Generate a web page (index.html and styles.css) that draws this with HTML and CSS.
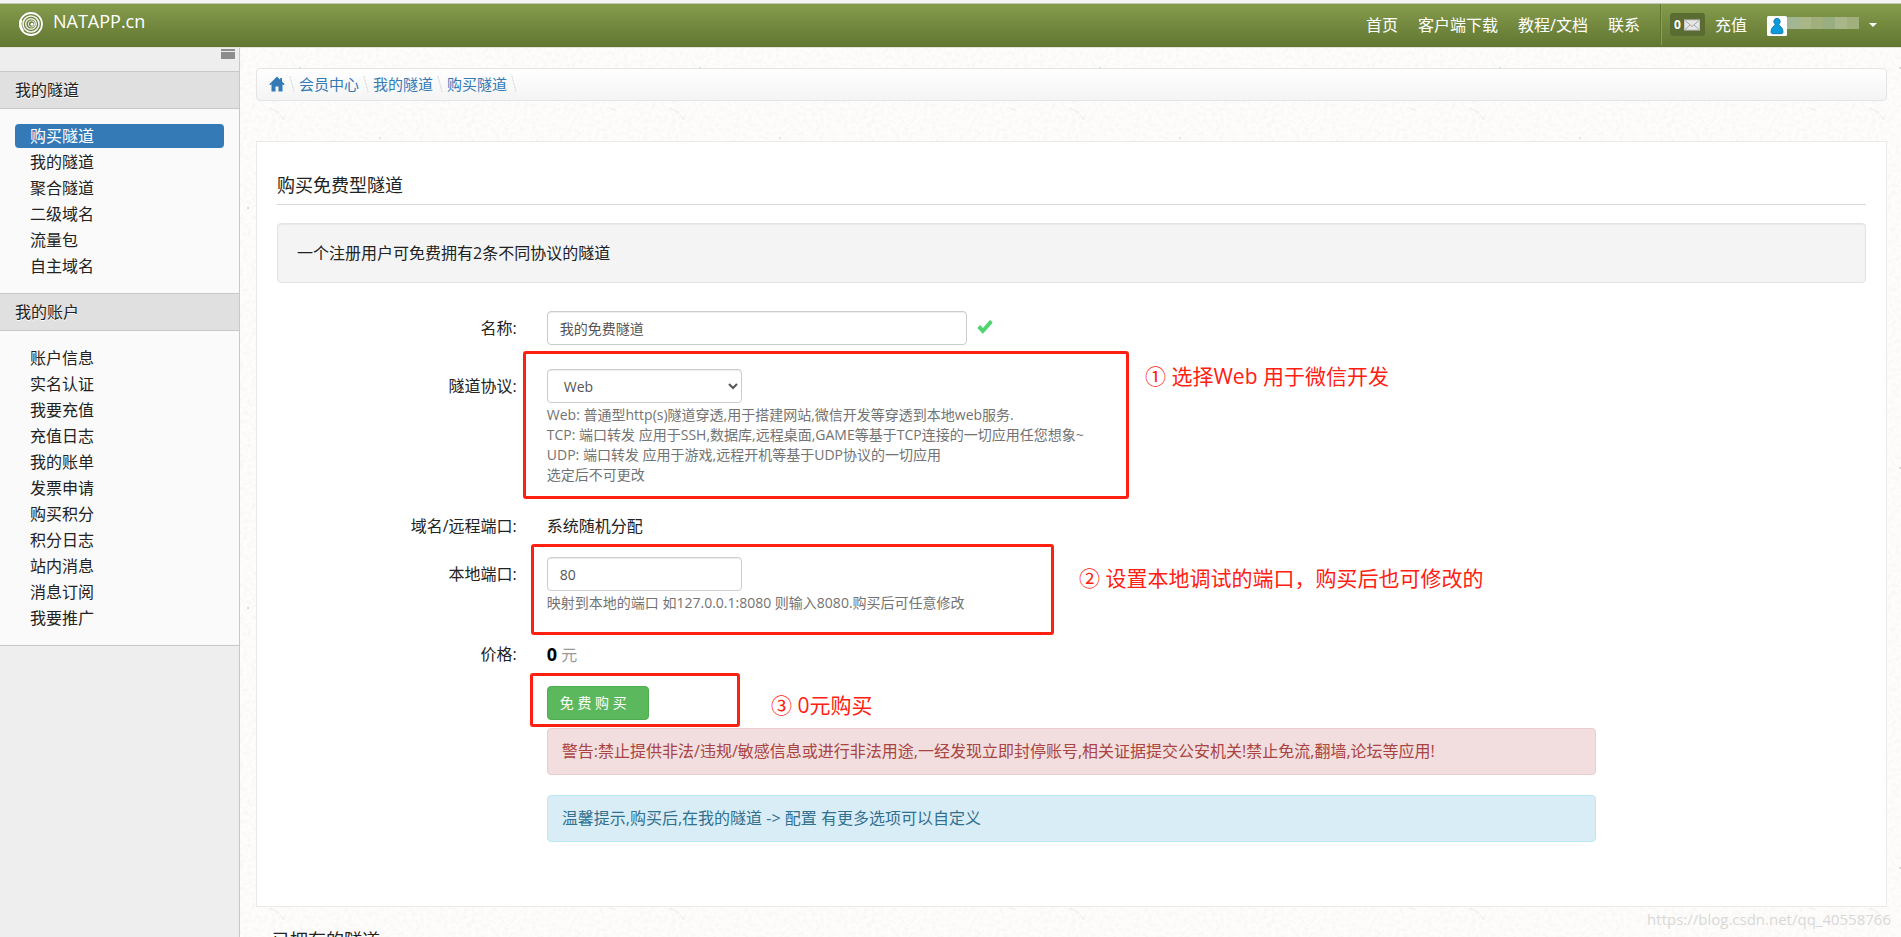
FILE: index.html
```html
<!DOCTYPE html>
<html lang="zh-CN">
<head>
<meta charset="utf-8">
<title>NATAPP.cn</title>
<link rel="stylesheet" href="styles.css">
</head>
<body>
<header class="topbar">
  <a class="brand" href="#">
    <svg class="brand-logo" viewBox="0 0 26 26" aria-hidden="true">
      <circle cx="13" cy="13" r="12.5" fill="#5f7333" opacity=".5"/>
      <g fill="none" stroke="#fff">
        <circle cx="13" cy="13" r="11" stroke-width="1.8"/>
        <path d="M5 20a11 11 0 0 1-2-11" stroke-width="2.6"/>
        <circle cx="13" cy="13" r="8" stroke-width="1.6" opacity=".9"/>
        <circle cx="13" cy="13" r="5.3" stroke-width="1.5" opacity=".85"/>
        <circle cx="13.5" cy="13" r="3.2" stroke-width="1" opacity=".85"/>
      </g>
      <circle cx="14" cy="13.2" r="1.5" fill="#fff"/>
    </svg>
    <span class="brand-name">NATAPP.cn</span>
  </a>
  <nav class="topnav">
    <a href="#">首页</a>
    <a href="#">客户端下载</a>
    <a href="#">教程/文档</a>
    <a href="#">联系</a>
  </nav>
  <div class="account">
    <a class="mail" href="#"><b>0</b>
      <svg viewBox="0 0 16 12" aria-hidden="true"><rect x=".5" y="1" width="15" height="10" fill="#e6e6e6" stroke="#c6c6cb"/><path d="M1 1.500l7 6 7-6M1 10.500l5-4.500M15 10.500l-5-4.500" fill="none" stroke="#a5a5a5"/></svg>
    </a>
    <a href="#">充值</a>
    <button class="user" type="button" aria-label="账户">
      <svg class="avatar" viewBox="0 0 20 20" aria-hidden="true"><rect width="20" height="20" rx="1.500" fill="#fff"/><path d="M10 2.300a3.200 3.200 0 0 1 2.400 5.300c-.6.700-.6 1.500.2 2.100 2 1.200 3.400 3.200 3.400 6.300 0 1.200-.8 1.700-2 1.700H6c-1.200 0-2-.5-2-1.700 0-3.100 1.400-5.100 3.400-6.300.8-.6.800-1.400.2-2.100A3.200 3.200 0 0 1 10 2.300z" fill="#0a9bdc" stroke="#06689e" stroke-width=".8"/></svg>
      <span class="mask"><i></i><i></i><i></i><i></i><i></i><i></i></span>
      <span class="caret"></span>
    </button>
  </div>
</header>

<div class="shell">
  <aside class="sidebar">
    <button class="collapse" type="button" aria-label="菜单"></button>
    <h2>我的隧道</h2>
    <ul>
      <li><a class="active" href="#">购买隧道</a></li>
      <li><a href="#">我的隧道</a></li>
      <li><a href="#">聚合隧道</a></li>
      <li><a href="#">二级域名</a></li>
      <li><a href="#">流量包</a></li>
      <li><a href="#">自主域名</a></li>
    </ul>
    <h2>我的账户</h2>
    <ul>
      <li><a href="#">账户信息</a></li>
      <li><a href="#">实名认证</a></li>
      <li><a href="#">我要充值</a></li>
      <li><a href="#">充值日志</a></li>
      <li><a href="#">我的账单</a></li>
      <li><a href="#">发票申请</a></li>
      <li><a href="#">购买积分</a></li>
      <li><a href="#">积分日志</a></li>
      <li><a href="#">站内消息</a></li>
      <li><a href="#">消息订阅</a></li>
      <li><a href="#">我要推广</a></li>
    </ul>
  </aside>

  <main class="main">
    <nav class="crumbs">
      <a href="#" aria-label="首页"><svg viewBox="0 0 16 16" aria-hidden="true"><path d="M8 .5L.3 8.200l1 1L2.500 8.200V15.500H6.500V10.500H9.500V15.500H13.500V8.200l1.200 1 1-1L13 5.500V2h-1.800v1.700z" fill="#337ab7"/></svg></a>
      <a href="#">会员中心</a>
      <a href="#">我的隧道</a>
      <a href="#">购买隧道</a>
    </nav>

    <section class="panel">
      <h1>购买免费型隧道</h1>
      <p class="well">一个注册用户可免费拥有2条不同协议的隧道</p>

      <form class="form">
        <div class="row">
          <label for="name">名称:</label>
          <div class="field inline">
            <input class="control wide" id="name" type="text" value="我的免费隧道">
            <svg class="ok" viewBox="0 0 16 16" aria-hidden="true"><path d="M2.500 6.500L.8 8.600a.8.800 0 0 0 0 1L5.200 14.300a.8.800 0 0 0 1.200 0L15.300 4.200a.8.800 0 0 0 0-1.100L13.600 1.400a.8.800 0 0 0-1.200 0L6 9 3.700 6.500a.8.800 0 0 0-1.200 0z" fill="#4fd46f"/></svg>
          </div>
        </div>
        <div class="row">
          <label for="proto">隧道协议:</label>
          <div class="field">
            <select class="control" id="proto"><option>Web</option><option>TCP</option><option>UDP</option></select>
            <p class="help">Web: 普通型http(s)隧道穿透,用于搭建网站,微信开发等穿透到本地web服务.<br>TCP: 端口转发 应用于SSH,数据库,远程桌面,GAME等基于TCP连接的一切应用任您想象~<br>UDP: 端口转发 应用于游戏,远程开机等基于UDP协议的一切应用<br>选定后不可更改</p>
          </div>
          <div class="mark mark-1"></div>
          <p class="note note-1">① 选择Web 用于微信开发</p>
        </div>
        <div class="row">
          <span class="label">域名/远程端口:</span>
          <div class="field static">系统随机分配</div>
        </div>
        <div class="row tight">
          <label for="port">本地端口:</label>
          <div class="field">
            <input class="control" id="port" type="text" value="80">
            <p class="help">映射到本地的端口 如127.0.0.1:8080 则输入8080.购买后可任意修改</p>
          </div>
          <div class="mark mark-2"></div>
          <p class="note note-2">② 设置本地调试的端口，购买后也可修改的</p>
        </div>
        <div class="row">
          <span class="label">价格:</span>
          <div class="field static price"><b>0</b> 元</div>
        </div>
        <div class="row tight">
          <span class="label"></span>
          <div class="field">
            <button class="buy" type="button">免 费 购 买</button>
            <p class="alert danger">警告:禁止提供非法/违规/敏感信息或进行非法用途,一经发现立即封停账号,相关证据提交公安机关!禁止免流,翻墙,论坛等应用!</p>
            <p class="alert info">温馨提示,购买后,在我的隧道 -&gt; 配置 有更多选项可以自定义</p>
          </div>
          <div class="mark mark-3"></div>
          <p class="note note-3">③ 0元购买</p>
        </div>
      </form>
    </section>

    <h2 class="owned">已拥有的隧道</h2>
  </main>
</div>
<p class="watermark">https://blog.csdn.net/qq_40558766</p>
</body>
</html>
```

FILE: styles.css
```css
* { box-sizing: border-box; }

body {
  margin: 0;
  height: 100vh;
  overflow: hidden;
  display: flex;
  flex-direction: column;
  position: relative;
  border-top: 3px solid #f4f4f4;
  font-family: "Open Sans", "Noto Sans CJK SC", sans-serif;
  font-size: 16px;
  font-weight: 400;
  line-height: 24px;
  color: #222;
  background: #eee;
}

h1, h2, p, ul { margin: 0; padding: 0; font-weight: inherit; }
ul { list-style: none; }
a { color: inherit; text-decoration: none; }
button, input, select { font: inherit; }
svg { display: block; }

/* top bar */
.topbar {
  flex: none;
  display: flex;
  height: 45px;
  padding: 0 24px 0 18px;
  color: #fff;
  border-top: 1px solid #c3c8b4;
  border-bottom: 1px solid #e4e6dc;
  background: linear-gradient(#859b4d, #617630);
}
.brand { display: flex; align-items: center; gap: 9px; margin-right: auto; }
.brand-logo { width: 26px; height: 26px; margin-bottom: 4px; }
.brand-name { font-size: 18px; margin-bottom: 10px; }
.topnav { display: flex; align-items: center; gap: 20px; padding: 0 20px 2px 0; }
.account {
  display: flex;
  align-items: center;
  gap: 10px;
  align-self: flex-start;
  height: 41px;
  padding-left: 9px;
  border-left: 1px solid #61752f;
  box-shadow: inset 1px 0 #8ba154;
}
.mail {
  display: flex;
  align-items: center;
  gap: 3px;
  height: 23px;
  width: 35px;
  padding-left: 4px;
  border-radius: 3px;
  background: #5a6c32;
  font-size: 12px;
}
.mail svg { width: 16px; height: 12px; }
.user {
  display: flex;
  align-items: center;
  margin-left: 10px;
  padding: 0;
  border: 0;
  background: none;
}
.avatar { width: 20px; height: 20px; margin-top: 2px; }
.mask { display: flex; width: 72px; height: 12px; margin-right: 10px; margin-bottom: 4px; }
.mask i { flex: 1; background: #a0af7c; }
.mask i:nth-child(1) { background: #a3b694; }
.mask i:nth-child(2) { background: #a9b687; }
.mask i:nth-child(4) { background: #98ae80; }
.mask i:nth-child(5) { background: #a8b68a; }
.caret { border: 4px solid transparent; border-top-color: #fff; border-bottom: 0; }

.shell { flex: 1; display: flex; min-height: 0; }

/* sidebar */
.sidebar { flex: none; width: 240px; border-right: 1px solid #c8c8c8; background: #eee; }
.collapse {
  display: block;
  width: 14px;
  height: 10px;
  margin: 1px 4px 12px auto;
  padding: 0;
  border: 0;
  background: linear-gradient(#8d8d8d 2px, #eee 2px, #eee 3px, #8d8d8d 3px);
}
.sidebar h2 {
  height: 38px;
  padding-left: 15px;
  font-size: 16px;
  line-height: 36px;
  border-top: 1px solid #c8c8c8;
  border-bottom: 1px solid #c8c8c8;
  background: #e0e0e0;
  text-shadow: 0 1px #fff;
}
.sidebar ul { display: grid; gap: 2px; padding: 15px; background: #fafafa; }
.sidebar ul:last-child { border-bottom: 1px solid #c8c8c8; }
.sidebar li a { display: block; padding-left: 15px; border-radius: 4px; }
.sidebar li a.active { color: #fff; background: #337ab7; }

/* content */
.main {
  flex: 1;
  min-width: 0;
  overflow: hidden;
  padding: 20px 14px 0 16px;
  background-color: #fefdfc;
  background-image: url("data:image/svg+xml,%3Csvg xmlns='http://www.w3.org/2000/svg' width='400' height='400'%3E%3Cfilter id='a'%3E%3CfeTurbulence type='fractalNoise' baseFrequency='.25' numOctaves='3' stitchTiles='stitch'/%3E%3CfeColorMatrix values='0 0 0 0 .64 0 0 0 0 .6 0 0 0 0 .56 .3 0 0 0 -.12'/%3E%3C/filter%3E%3Crect width='400' height='400' filter='url(%23a)'/%3E%3Cg fill='none' stroke='%23b5b5ae' opacity='.25'%3E%3Cpath d='M30 60q10 4 14 12M210 25q12-8 20 2M330 180q8-10 18-12M90 250q14 2 20-6M250 330l10 9M160 140l4 7M20 350l3-6M370 60l5 2'/%3E%3C/g%3E%3Cg fill='%23999' opacity='.5'%3E%3Ccircle cx='60' cy='20' r='.9'/%3E%3Ccircle cx='140' cy='90' r='.8'/%3E%3Ccircle cx='8' cy='160' r='1'/%3E%3Ccircle cx='300' cy='100' r='.8'/%3E%3Ccircle cx='260' cy='220' r='.9'/%3E%3Ccircle cx='100' cy='320' r='.9'/%3E%3Ccircle cx='350' cy='290' r='.8'/%3E%3C/g%3E%3C/svg%3E");
}
.crumbs {
  display: flex;
  align-items: center;
  height: 33px;
  padding: 0 0 2px 12px;
  border: 1px solid #e5e5e5;
  border-radius: 4px;
  background: linear-gradient(#fff, #f4f4f4);
  color: #337ab7;
  font-size: 15px;
}
.crumbs svg { width: 16px; height: 16px; }
.crumbs a { display: flex; align-items: center; }
.crumbs a::after {
  content: "";
  width: 14px;
  height: 16px;
  background: linear-gradient(75deg, transparent 46%, #e6e6e6 47%, #e6e6e6 53%, transparent 54%);
}

.panel {
  margin-top: 40px;
  padding: 30px 20px 64px;
  border: 1px solid #eaeaea;
  background: #fff;
}
.panel h1 {
  padding-bottom: 6px;
  border-bottom: 1px solid #d9d9d9;
  font-size: 18px;
  line-height: 26px;
}
.well {
  margin-top: 18px;
  padding: 17px 19px;
  border: 1px solid #e3e3e3;
  border-radius: 4px;
  background: #f4f4f4;
  box-shadow: inset 0 1px 1px rgba(0, 0, 0, .05);
}

.form { margin: 28px -15px 0; }
.row { display: flex; position: relative; margin-top: 24px; }
.row:first-child { margin-top: 0; }
.row.tight { margin-top: 14px; }
.row label, .label { width: 16.6667%; padding: 0 15px; text-align: right; line-height: 34px; }
.field { width: 66.6667%; padding: 0 15px; }
.inline { display: flex; align-items: center; gap: 10px; }
.static { line-height: 34px; }
.control {
  display: block;
  width: 195px;
  height: 34px;
  padding: 6px 12px;
  border: 1px solid #ccc;
  border-radius: 4px;
  background: #fff;
  box-shadow: inset 0 1px 1px rgba(0, 0, 0, .075);
  color: #555;
  font-size: 14px;
  line-height: 20px;
}
select.control { padding-right: 4px; }
.wide { width: 420px; }
.ok { width: 16px; height: 16px; margin-bottom: 2px; }
.help { margin-top: 2px; color: #737373; font-size: 14px; line-height: 20px; }
.price { color: #999; }
.price b { color: #000; font-size: 18px; font-weight: 700; }

.buy {
  display: block;
  min-width: 102px;
  height: 34px;
  padding: 0 12px;
  border: 1px solid #4cae4c;
  border-radius: 4px;
  background: #5cb85c;
  color: #fff;
  font-size: 14px;
  text-align: left;
}
.alert { padding: 11px 14px; border: 1px solid; border-radius: 4px; line-height: 23px; }
.danger { margin-top: 8px; border-color: #ebccd1; background: #f2dede; color: #a94442; }
.info { margin-top: 20px; border-color: #bce8f1; background: #d9edf7; color: #31708f; }

/* callouts drawn over the form */
.mark { position: absolute; border: 3px solid #ff2011; border-radius: 3px; pointer-events: none; }
.mark-1 { left: 261px; top: -18px; width: 606px; height: 148px; }
.mark-2 { left: 269px; top: -13px; width: 523px; height: 91px; }
.mark-3 { left: 268px; top: -13px; width: 210px; height: 54px; }
.note { position: absolute; color: #ff2011; font-size: 21px; line-height: 28px; white-space: nowrap; }
.note-1 { left: 883px; top: -7px; }
.note-2 { left: 817px; top: 7px; }
.note-3 { left: 509px; top: 5px; }

.owned { margin: 19px 0 0 16px; font-size: 18px; line-height: 28px; }
.watermark { position: absolute; right: 10px; bottom: 6px; color: #d8d8d6; font-size: 15px; }
```
